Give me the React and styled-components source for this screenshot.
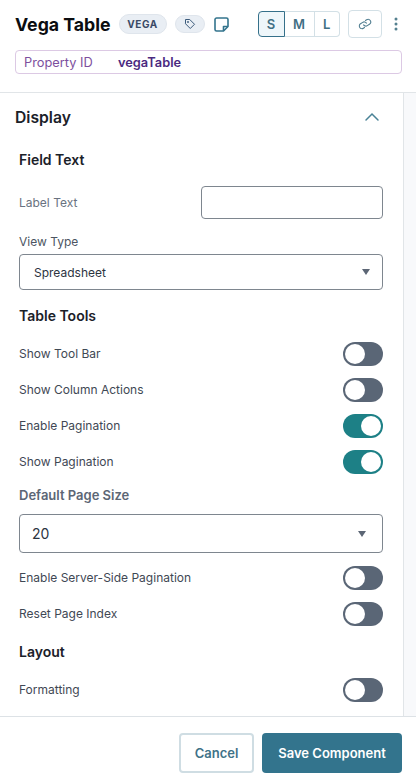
import styled, { createGlobalStyle } from 'styled-components';

const GlobalStyle = createGlobalStyle`
    html, body {
        margin: 0;
        padding: 0;
        background: #fff;
        font-family: 'Inter', 'Liberation Sans', sans-serif;
    }
    * {
        box-sizing: border-box;
    }
`;

const Page = styled.div`
    display: flex;
    flex-direction: column;
    width: 416px;
    height: 782px;
    overflow: hidden;
    background: #fff;
`;

const Header = styled.header`
    display: flex;
    flex-direction: column;
    height: 92px;
    padding: 10px 14px 0 15px;
    flex: none;
`;

const TopRow = styled.div`
    display: flex;
    align-items: center;
    height: 28px;
`;

const Title = styled.h1`
    margin: 0 8px 0 0;
    font-size: 17.7px;
    font-weight: 700;
    color: #0b0d10;
    white-space: nowrap;
`;

const Pill = styled.span`
    display: inline-flex;
    align-items: center;
    justify-content: center;
    width: ${(props) => props.$width}px;
    height: ${(props) => props.$height}px;
    margin-right: 8px;
    border: 1px solid #dfe5ec;
    border-radius: 10px;
    background: #e9eef4;
    color: #3b4a66;
    font-size: 10px;
    font-weight: 700;
    letter-spacing: 0.6px;
`;

const NoteButton = styled.span`
    display: inline-flex;
    margin-left: 1px;
    margin-right: 29px;
`;

const SizeGroup = styled.div`
    display: flex;
    width: 82px;
    height: 26px;
    margin-right: 8px;
`;

const SizeButton = styled.span`
    display: flex;
    align-items: center;
    justify-content: center;
    width: ${(props) => props.$width}px;
    font-size: 13px;
    font-weight: 600;
    color: #3f6f84;
    border: 1px solid ${(props) => (props.$active ? '#35708a' : '#d3e0e6')};
    border-left-width: ${(props) => (props.$active ? 1 : 0)}px;
    background: ${(props) => (props.$active ? '#eef6fa' : '#fff')};
    border-radius: ${(props) => props.$radius};
`;

const LinkButton = styled.span`
    display: flex;
    align-items: center;
    justify-content: center;
    width: 34px;
    height: 28px;
    margin-right: 12px;
    border: 1px solid #d3e0e6;
    border-radius: 4px;
    color: #4f7d90;
`;

const MoreButton = styled.span`
    display: flex;
    color: #54808f;
`;

const PropertyBox = styled.div`
    display: flex;
    align-items: center;
    width: 387px;
    height: 24px;
    margin-top: 12px;
    padding-left: 8px;
    border: 1px solid #dcc9e4;
    border-radius: 4px;
    font-size: 12.8px;
`;

const PropertyLabel = styled.span`
    width: 94px;
    color: #7d4f9e;
`;

const PropertyValue = styled.span`
    font-weight: 600;
    color: #4b2a80;
`;

const Panel = styled.main`
    flex: 1;
    min-height: 0;
    display: flex;
    overflow: hidden;
    border-top: 1px solid #e1e5e8;
    background: #f8f9fb;
`;

const PanelBody = styled.div`
    width: 404px;
    flex: none;
    background: #fff;
    border-right: 1px solid #e1e5e8;
    padding: 0 20px 0 19px;
`;

const SectionHead = styled.div`
    display: flex;
    align-items: center;
    justify-content: space-between;
    height: 48px;
    margin-left: -4px;
    padding-right: 3px;
`;

const SectionTitle = styled.h2`
    margin: 0;
    font-size: 15.7px;
    font-weight: 600;
    color: #1b2129;
`;

const GroupTitle = styled.h3`
    margin: 0 0 ${(props) => props.$gap || 0}px;
    padding-bottom: 2px;
    display: flex;
    align-items: center;
    height: ${(props) => props.$height}px;
    font-size: ${(props) => (props.$muted ? 13 : 14)}px;
    font-weight: 600;
    color: ${(props) => (props.$muted ? '#5c6675' : '#1b2129')};
`;

const InlineField = styled.div`
    display: flex;
    align-items: center;
    justify-content: space-between;
    margin-top: 7px;
    font-size: 12px;
    color: #697280;
`;

const TextInput = styled.div`
    width: 182px;
    height: 33px;
    border: 1px solid #7e868f;
    border-radius: 4px;
    background: #fff;
`;

const StackLabel = styled.div`
    margin-top: 15px;
    height: 20px;
    font-size: 12px;
    line-height: 15px;
    color: #4c5562;
`;

const SelectBox = styled.div`
    display: flex;
    align-items: center;
    justify-content: space-between;
    height: ${(props) => props.$height}px;
    margin-bottom: ${(props) => props.$gap || 0}px;
    padding: 0 ${(props) => props.$right}px 0 ${(props) => props.$left}px;
    border: 1px solid #7e868f;
    border-radius: 4px;
    background: #fff;
    font-size: ${(props) => props.$size}px;
    color: #2c343f;
`;

const Caret = styled.span`
    width: 0;
    height: 0;
    border-left: 4.5px solid transparent;
    border-right: 4.5px solid transparent;
    border-top: 6px solid #5c6675;
`;

const ToggleRow = styled.div`
    display: flex;
    align-items: center;
    justify-content: space-between;
    height: 24px;
    margin-bottom: 12px;
    font-size: 12px;
    color: #3f4854;
`;

const ToggleLabel = styled.span`
    padding-bottom: 2px;
`;

const Track = styled.span`
    display: flex;
    align-items: center;
    justify-content: ${(props) => (props.$on ? 'flex-end' : 'flex-start')};
    width: 40px;
    height: 24px;
    padding: 0 2px;
    border-radius: 12px;
    background: ${(props) => (props.$on ? '#1d8086' : '#5a6676')};
`;

const Knob = styled.span`
    width: 20px;
    height: 20px;
    border-radius: 50%;
    background: #fff;
`;

const Footer = styled.footer`
    flex: none;
    display: flex;
    justify-content: flex-end;
    gap: 8px;
    height: 66px;
    padding: 16px 14px 0 0;
    border-top: 1px solid #dde2e6;
    background: #fff;
`;

const Button = styled.span`
    display: flex;
    align-items: center;
    justify-content: center;
    width: ${(props) => props.$width}px;
    height: 40px;
    border-radius: 4px;
    font-size: 13px;
    font-weight: 600;
    color: ${(props) => (props.$primary ? '#fff' : '#3f7288')};
    background: ${(props) => (props.$primary ? '#33748d' : '#fff')};
    border: ${(props) => (props.$primary ? 'none' : '2px solid #cfdde3')};
`;

const Toggle = ({ label, on }) => (
    <ToggleRow>
        <ToggleLabel>{label}</ToggleLabel>
        <Track $on={on}>
            <Knob />
        </Track>
    </ToggleRow>
);

const TagIcon = () => (
    <svg width="12" height="12" viewBox="0 0 24 24" fill="none" stroke="#3b5a7a" strokeWidth="2" strokeLinejoin="round">
        <path d="M3 3h8.5l9.5 9.5-8.5 8.5L3 11.5z" />
        <circle cx="8" cy="8" r="1.2" />
    </svg>
);

const NoteIcon = () => (
    <svg width="15" height="15" viewBox="0 0 15 15" fill="none" stroke="#33748d" strokeWidth="1.6" strokeLinejoin="round">
        <path d="M2.6 1h9.8a1.6 1.6 0 0 1 1.6 1.6V9.5L9.5 14H2.6A1.6 1.6 0 0 1 1 12.4V2.6A1.6 1.6 0 0 1 2.6 1z" />
        <path d="M14 9.5H9.5V14" />
    </svg>
);

const ChainIcon = () => (
    <svg width="14" height="14" viewBox="0 0 24 24" fill="none" stroke="currentColor" strokeWidth="1.8" strokeLinecap="round">
        <g transform="rotate(12 12 12)">
            <path d="M10 14a4.5 4.5 0 0 0 6.4 0l3.2-3.2a4.5 4.5 0 0 0-6.4-6.4L11.6 6" />
            <path d="M14 10a4.5 4.5 0 0 0-6.4 0l-3.2 3.2a4.5 4.5 0 0 0 6.4 6.4l1.6-1.6" />
        </g>
    </svg>
);

const DotsIcon = () => (
    <svg width="4" height="14" viewBox="0 0 4 14" fill="currentColor">
        <circle cx="2" cy="2" r="1.5" />
        <circle cx="2" cy="7" r="1.5" />
        <circle cx="2" cy="12" r="1.5" />
    </svg>
);

const ChevronIcon = () => (
    <svg width="16" height="10" viewBox="0 0 16 10" fill="none" stroke="#4a8296" strokeWidth="1.5" strokeLinecap="round">
        <path d="M2 8l6-6 6 6" />
    </svg>
);

export default function App() {
    return (
        <>
            <GlobalStyle />
            <Page>
                <Header>
                    <TopRow>
                        <Title>Vega Table</Title>
                        <Pill $width={48} $height={20}>VEGA</Pill>
                        <Pill $width={30} $height={18}><TagIcon /></Pill>
                        <NoteButton><NoteIcon /></NoteButton>
                        <SizeGroup>
                            <SizeButton $width={27} $active $radius="4px 0 0 4px">S</SizeButton>
                            <SizeButton $width={30} $radius="0">M</SizeButton>
                            <SizeButton $width={25} $radius="0 4px 4px 0">L</SizeButton>
                        </SizeGroup>
                        <LinkButton><ChainIcon /></LinkButton>
                        <MoreButton><DotsIcon /></MoreButton>
                    </TopRow>
                    <PropertyBox>
                        <PropertyLabel>Property ID</PropertyLabel>
                        <PropertyValue>vegaTable</PropertyValue>
                    </PropertyBox>
                </Header>
                <Panel>
                    <PanelBody>
                        <SectionHead>
                            <SectionTitle>Display</SectionTitle>
                            <ChevronIcon />
                        </SectionHead>
                        <GroupTitle $height={38}>Field Text</GroupTitle>
                        <InlineField>
                            <span>Label Text</span>
                            <TextInput />
                        </InlineField>
                        <StackLabel>View Type</StackLabel>
                        <SelectBox $height={36} $left={14} $right={12} $size={12}>
                            <span>Spreadsheet</span>
                            <Caret />
                        </SelectBox>
                        <GroupTitle $height={52}>Table Tools</GroupTitle>
                        <Toggle label="Show Tool Bar" />
                        <Toggle label="Show Column Actions" />
                        <Toggle label="Enable Pagination" on />
                        <Toggle label="Show Pagination" on />
                        <GroupTitle $height={20} $gap={8} $muted>Default Page Size</GroupTitle>
                        <SelectBox $height={39} $gap={13} $left={12} $right={16} $size={14}>
                            <span>20</span>
                            <Caret />
                        </SelectBox>
                        <Toggle label="Enable Server-Side Pagination" />
                        <Toggle label="Reset Page Index" />
                        <GroupTitle $height={28} $gap={12}>Layout</GroupTitle>
                        <Toggle label="Formatting" />
                    </PanelBody>
                </Panel>
                <Footer>
                    <Button $width={75}>Cancel</Button>
                    <Button $width={140} $primary>Save Component</Button>
                </Footer>
            </Page>
        </>
    );
}
